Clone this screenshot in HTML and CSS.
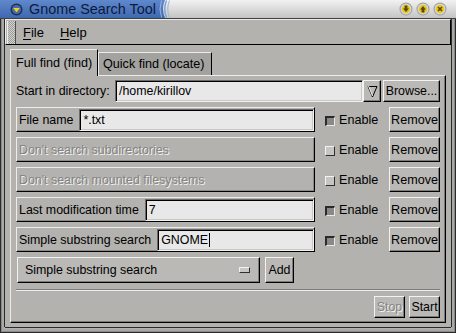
FILE: index.html
```html
<!DOCTYPE html>
<html>
<head>
<meta charset="utf-8">
<link rel="stylesheet" href="styles.css">
</head>
<body>
<div class="win">
  <div class="titlebar">
    <div class="tb-blue">
      <svg class="appicon" width="13" height="13" viewBox="0 0 13 13">
        <circle cx="6.5" cy="6.5" r="6" fill="#1c2e5a"/>
        <circle cx="6.5" cy="6.5" r="4.6" fill="#4a6aa8"/>
        <path d="M3.2 5 L9.8 5 L6.5 9.2 Z" fill="#f2d21c"/>
      </svg>
      <span class="title">Gnome Search Tool</span>
    </div>
    <svg class="swoosh" width="16" height="18" viewBox="0 0 16 18">
      <defs>
        <linearGradient id="gg" x1="0" y1="0" x2="0" y2="1">
          <stop offset="0" stop-color="#f2f2f2"/>
          <stop offset="1" stop-color="#c4c4c4"/>
        </linearGradient>
        <linearGradient id="bg" x1="0" y1="0" x2="0" y2="1">
          <stop offset="0" stop-color="#6088cc"/>
          <stop offset="1" stop-color="#3e68b0"/>
        </linearGradient>
      </defs>
      <rect width="16" height="18" fill="url(#gg)"/>
      <path d="M0 0 L7 0 Q3 9 7 18 L0 18 Z" fill="url(#bg)"/>
      <path d="M3.5 0.5 Q0.5 9 3.5 17.5" stroke="#9cb6e0" stroke-width="1" fill="none"/>
      <path d="M8.5 0.5 Q5 9 8.5 17.5" stroke="#7a9ed8" stroke-width="1.4" fill="none"/>
      <path d="M11.5 0.5 Q8 9 11.5 17.5" stroke="#9ab4dc" stroke-width="1" fill="none"/>
    </svg>
    <div class="tb-gray"></div>
    <div class="tb-btns">
      <svg width="14" height="14" viewBox="0 0 14 14">
        <circle cx="7" cy="7" r="6.5" fill="#9a9a9a"/>
        <circle cx="7" cy="7" r="5.5" fill="#d8d8d8"/>
        <circle cx="7" cy="7" r="4.3" fill="#e8c81c"/>
        <path d="M5.6 3.6 H8.4 V6.6 H10 L7 10 L4 6.6 H5.6 Z" fill="#5a4a10"/>
      </svg>
      <svg width="14" height="14" viewBox="0 0 14 14">
        <circle cx="7" cy="7" r="6.5" fill="#9a9a9a"/>
        <circle cx="7" cy="7" r="5.5" fill="#d8d8d8"/>
        <circle cx="7" cy="7" r="4.3" fill="#e8c81c"/>
        <path d="M5.6 10.4 H8.4 V7.4 H10 L7 4 L4 7.4 H5.6 Z" fill="#5a4a10"/>
      </svg>
      <svg width="14" height="14" viewBox="0 0 14 14">
        <circle cx="7" cy="7" r="6.5" fill="#9a9a9a"/>
        <circle cx="7" cy="7" r="5.5" fill="#d8d8d8"/>
        <circle cx="7" cy="7" r="4.3" fill="#e8c81c"/>
        <path d="M5 5 L9 9 M9 5 L5 9" stroke="#5a4a10" stroke-width="1.6"/>
      </svg>
    </div>
  </div>
  <div class="client">
    <div class="menubar">
      <span class="handle"></span>
      <span class="menu"><u>F</u>ile</span>
      <span class="menu"><u>H</u>elp</span>
    </div>
    <div class="body">
      <div class="notebook">
        <div class="tabs">
          <div class="tab active">Full find (find)</div>
          <div class="tab">Quick find (locate)</div>
        </div>
        <div class="panel">
          <div class="dirrow">
            <span class="lbl">Start in directory:</span>
            <div class="entry direntry">/home/kirillov</div>
            <div class="btn arrowbtn">
              <svg width="11" height="13" viewBox="0 0 11 13">
                <path d="M1 1.5 L10 1.5 L5.5 12 Z" fill="none" stroke="#000" stroke-width="1"/>
                <path d="M1.5 1 L5.5 11" stroke="#f0f0f0" stroke-width="1"/>
              </svg>
            </div>
            <div class="btn browse">Browse...</div>
          </div>

          <div class="crit">
            <div class="frame"><span class="lbl">File name</span><div class="entry">*.txt</div></div>
            <span class="chk on"></span><span class="enable">Enable</span>
            <div class="btn remove">Remove</div>
          </div>
          <div class="crit">
            <div class="frame off"><span class="lbl">Don't search subdirectories</span></div>
            <span class="chk"></span><span class="enable">Enable</span>
            <div class="btn remove">Remove</div>
          </div>
          <div class="crit">
            <div class="frame off"><span class="lbl">Don't search mounted filesystems</span></div>
            <span class="chk"></span><span class="enable">Enable</span>
            <div class="btn remove">Remove</div>
          </div>
          <div class="crit">
            <div class="frame"><span class="lbl">Last modification time</span><div class="entry">7</div></div>
            <span class="chk on"></span><span class="enable">Enable</span>
            <div class="btn remove">Remove</div>
          </div>
          <div class="crit">
            <div class="frame"><span class="lbl">Simple substring search</span><div class="entry">GNOME<span class="caret"></span></div></div>
            <span class="chk on"></span><span class="enable">Enable</span>
            <div class="btn remove">Remove</div>
          </div>

          <div class="addrow">
            <div class="btn optmenu"><span>Simple substring search</span><span class="ind"></span></div>
            <div class="btn add">Add</div>
          </div>
          <div class="sep"></div>
          <div class="actions">
            <div class="btn stop">Stop</div>
            <div class="btn start">Start</div>
          </div>
        </div>
      </div>
    </div>
  </div>
</div>
</body>
</html>
```

FILE: styles.css
```css
* { box-sizing: border-box; }
html, body { margin: 0; padding: 0; }
body {
  width: 456px;
  height: 333px;
  overflow: hidden;
  background: #3c3c3c;
  font-family: "Liberation Sans", Arial, sans-serif;
  font-size: 12.4px;
  color: #000;
}
.win {
  width: 456px;
  height: 333px;
  display: flex;
  flex-direction: column;
  background: #b3b2af;
  box-shadow: inset 0 0 0 1px #2a2a2a, inset 0 0 0 2px #8a8a8a, inset 0 0 0 4px #a8a8a6;
}
.titlebar {
  height: 19px;
  display: flex;
  align-items: stretch;
  border-bottom: 1px solid #404040;
  flex: none;
}
.tb-blue {
  width: 158px;
  background: linear-gradient(#6088cc, #3e68b0);
  display: flex;
  align-items: center;
  padding-left: 10px;
  gap: 6px;
}
.title {
  font-size: 14.4px;
  color: #0c1a3c;
  white-space: nowrap;
}
.swoosh { flex: none; display: block; }
.tb-gray {
  flex: 1;
  background: linear-gradient(#f2f2f2, #c4c4c4);
}
.tb-btns {
  display: flex;
  align-items: center;
  gap: 3px;
  padding-right: 9px;
  padding-left: 4px;
  background: linear-gradient(#f2f2f2, #c4c4c4);
}
.tb-btns svg { display: block; }

.client {
  flex: 1;
  display: flex;
  flex-direction: column;
  margin: 0 5px 6px 5px;
  box-shadow: -1px 0 0 #2a2a2a, 1px 0 0 #2a2a2a, 0 1px 0 #2a2a2a;
  background: #b3b2af;
}

.menubar {
  height: 26px;
  display: flex;
  align-items: center;
  border-top: 1px solid #ececec;
  border-left: 1px solid #ececec;
  border-bottom: 1px solid #000;
  border-right: 1px solid #000;
  font-size: 13px;
  flex: none;
}
.handle {
  width: 9px;
  height: 23px;
  margin-left: 1px;
  margin-right: 7px;
  border-right: 1px solid #505050;
  border-left: 1px solid #ececec;
  background-color: #c8c8c4;
  background-image:
    linear-gradient(90deg, transparent 50%, #c8c8c4 50%),
    linear-gradient(transparent 50%, #c8c8c4 50%);
  background-size: 2px 2px;
  background-position: 0 0;
}
.handle {
  background-image: repeating-linear-gradient(45deg, #9a9a98 0 1px, #d4d4d0 1px 2px);
}
.menu { margin-right: 16px; }
.menu u { text-decoration: underline; text-underline-offset: 2px; }

.body {
  flex: 1;
  padding: 4px 5px 4px 5px;
  display: flex;
}
.notebook {
  flex: 1;
  display: flex;
  flex-direction: column;
}
.tabs {
  display: flex;
  align-items: flex-end;
  height: 26px;
  flex: none;
}
.tab {
  height: 23px;
  padding: 0 4px 0 5px;
  display: flex;
  align-items: center;
  background: #a3a29f;
  border-top: 1px solid #ececec;
  border-left: 1px solid #ececec;
  border-right: 1px solid #000;
  font-size: 12.6px;
  white-space: nowrap;
}
.tab.active {
  height: 27px;
  background: #b3b2af;
  padding: 0 5px 1px 5px;
  position: relative;
  top: 1px;
  width: 88px;
}
.tab:not(.active) { width: 114px; padding-left: 4px; }
.panel {
  flex: 1;
  border-top: 1px solid #ececec;
  border-left: 1px solid #ececec;
  border-right: 1px solid #000;
  border-bottom: 1px solid #000;
  box-shadow: inset -1px -1px 0 #7a7a7a;
  padding: 4px 5px 4px 5px;
  display: flex;
  flex-direction: column;
  gap: 5px;
}

.btn {
  background: #bab9b6;
  border-top: 1px solid #f2f2f2;
  border-left: 1px solid #f2f2f2;
  border-right: 1px solid #000;
  border-bottom: 1px solid #000;
  box-shadow: inset -1px -1px 0 #7c7c7a;
  display: flex;
  align-items: center;
  justify-content: center;
  white-space: nowrap;
}
.entry {
  background: #e8e8e8;
  border-top: 1px solid #6a6a6a;
  border-left: 1px solid #6a6a6a;
  border-right: 1px solid #f2f2f2;
  border-bottom: 1px solid #f2f2f2;
  box-shadow: inset 1px 1px 0 #000, inset -1px -1px 0 #c8c8c6;
  display: flex;
  align-items: center;
  padding-left: 3px;
  white-space: nowrap;
}

.dirrow {
  height: 22px;
  display: flex;
  align-items: stretch;
  flex: none;
}
.dirrow .lbl { display: flex; align-items: center; width: 99px; }
.direntry { width: 248px; }
.arrowbtn { width: 18px; }
.arrowbtn svg { display: block; }
.browse { width: 57px; margin-left: 2px; }

.crit {
  height: 25px;
  display: flex;
  align-items: center;
  flex: none;
}
.frame {
  width: 299px;
  height: 25px;
  display: flex;
  align-items: stretch;
  border-top: 1px solid #ececec;
  border-left: 1px solid #ececec;
  border-right: 1px solid #000;
  border-bottom: 1px solid #000;
  box-shadow: inset -1px -1px 0 #8a8a88;
  padding: 1px 0 0 2px;
}
.frame .lbl { display: flex; align-items: center; padding-right: 6px; white-space: nowrap; }
.frame .entry { flex: 1; }
.frame.off .lbl { color: #858482; text-shadow: 1px 1px 0 #f4f4f4; }
.caret { display: inline-block; width: 1px; height: 14px; background: #000; margin-left: 1px; }

.chk {
  width: 10px;
  height: 10px;
  margin-left: 10px;
  margin-right: 4px;
  border-top: 1px solid #f2f2f2;
  border-left: 1px solid #f2f2f2;
  border-right: 1px solid #303030;
  border-bottom: 1px solid #303030;
  background: #c6c5c2;
  position: relative;
  top: 1px;
}
.chk.on {
  background: #8a8987;
  border-top: 2px solid #2a2a2a;
  border-left: 2px solid #2a2a2a;
  border-right: 1px solid #e8e8e8;
  border-bottom: 1px solid #e8e8e8;
}
.enable { font-size: 12.6px; }
.remove { width: 51px; height: 25px; margin-left: auto; font-size: 12.6px; }

.addrow {
  height: 26px;
  display: flex;
  align-items: stretch;
  flex: none;
  padding-left: 1px;
}
.optmenu {
  width: 243px;
  justify-content: space-between;
  padding: 0 9px 0 7px;
}
.ind {
  width: 11px;
  height: 6px;
  background: #c8c7c4;
  border-top: 1px solid #f2f2f2;
  border-left: 1px solid #f2f2f2;
  border-right: 1px solid #303030;
  border-bottom: 1px solid #303030;
}
.add { width: 29px; margin-left: 5px; }
.sep {
  height: 2px;
  border-top: 1px solid #7c7c7a;
  border-bottom: 1px solid #ececec;
  margin-top: 1px;
  flex: none;
}
.actions {
  display: flex;
  justify-content: flex-end;
  gap: 4px;
  height: 22px;
  flex: none;
}
.stop { width: 31px; color: #858482; text-shadow: 1px 1px 0 #f4f4f4; }
.start { width: 31px; }
```
